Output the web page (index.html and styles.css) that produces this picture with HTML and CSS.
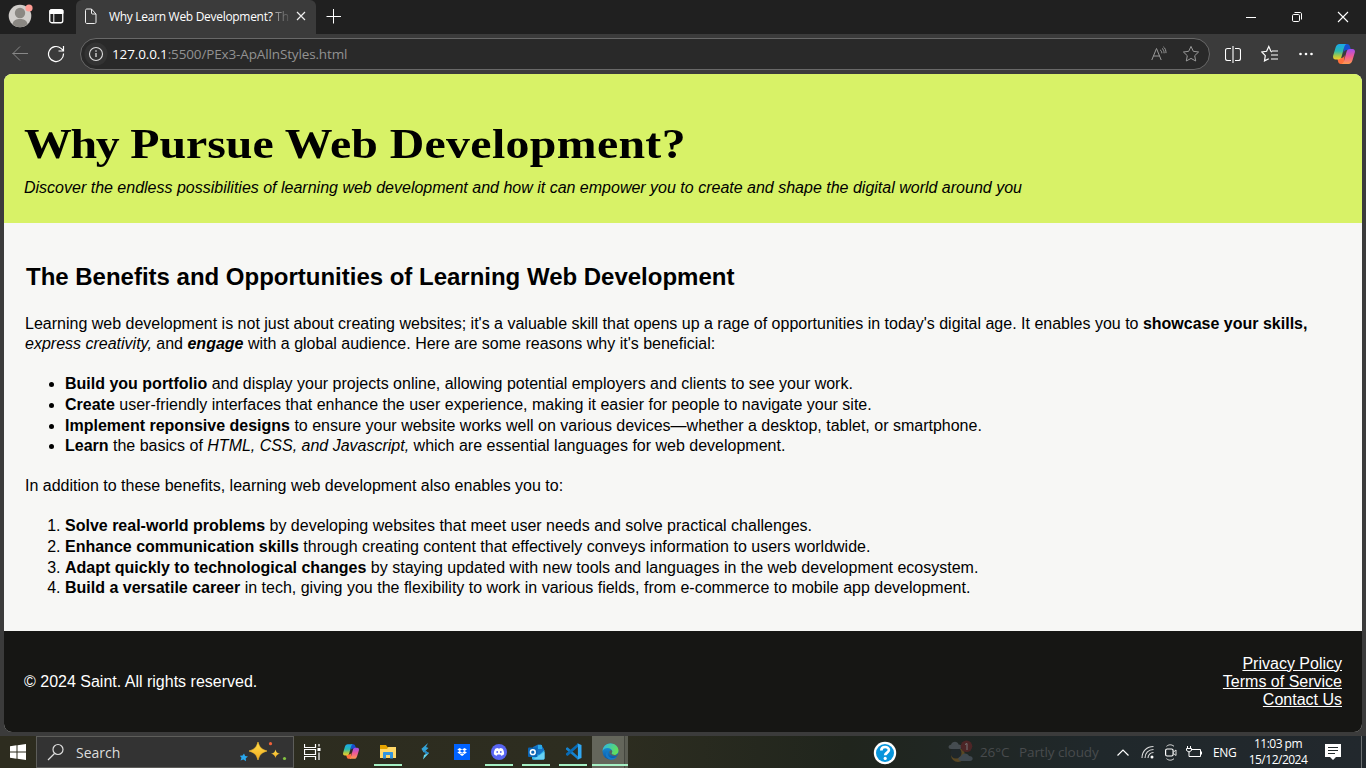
FILE: index.html
```html
<!DOCTYPE html>
<html lang="en">
<head>
<meta charset="utf-8">
<title>Why Learn Web Development?</title>
<link rel="stylesheet" href="styles.css">
</head>
<body>
<svg width="0" height="0" class="defs">
  <defs>
    <linearGradient id="cpA" x1="0" y1="0" x2="0" y2="1"><stop offset="0" stop-color="#1aa7ea"/><stop offset=".45" stop-color="#29b9b0"/><stop offset=".75" stop-color="#a5c84a"/><stop offset="1" stop-color="#f5cd2a"/></linearGradient>
    <linearGradient id="cpB" x1="0" y1="0" x2="0" y2="1"><stop offset="0" stop-color="#a24dee"/><stop offset=".5" stop-color="#ef5b94"/><stop offset="1" stop-color="#ff9a4d"/></linearGradient>
    <linearGradient id="edA" x1="0" y1="0" x2="1" y2=".4"><stop offset="0" stop-color="#2bb4ea"/><stop offset="1" stop-color="#61df5c"/></linearGradient>
    <linearGradient id="edB" x1="0" y1="0" x2="0" y2="1"><stop offset="0" stop-color="#1b9de2"/><stop offset="1" stop-color="#0d55a4"/></linearGradient>
    <linearGradient id="gold" x1="0" y1="0" x2="0" y2="1"><stop offset="0" stop-color="#ffe04b"/><stop offset="1" stop-color="#f3a91f"/></linearGradient>
    <symbol id="copilot" viewBox="0 0 22 20">
      <path d="M11 0h3c1.800 0 2.500 1 3 2.800l1 3.200h-4c-2 0-2.800 1-3.500 3z" fill="#174fd0"/>
      <path d="M11 20H8c-1.800 0-2.500-1-3-2.800L4.300 14H8c2 0 3-1 3.600-3z" fill="#ff703b"/>
      <path d="M6.500 0h7c-1.400.6-2 2-2.500 3.700l-2.300 8.500C8 14.600 7 15.500 5 15.500H2.500C.4 15.500-.3 13.600.2 11.600L2.600 3.500C3.300 1.200 4.500 0 6.500 0z" fill="url(#cpA)"/>
      <path d="M15.500 20H8.700c1.400-.6 2-2 2.500-3.700l2.200-8C14.100 5.900 15 5 17 5h2.500c2.100 0 2.800 1.700 2.300 3.500l-2.400 8c-.7 2.300-1.900 3.500-3.900 3.500z" fill="url(#cpB)"/>
    </symbol>
  </defs>
</svg>
<div class="screen">
  <header class="tabstrip">
    <svg class="avatar" width="26" height="28" viewBox="0 0 26 28"><circle cx="12" cy="16" r="11.300" fill="#d0cdca"/><circle cx="12" cy="13" r="5.200" fill="#8a8782"/><path d="M4.500 24c.8-3.800 4-5 7.500-5s6.700 1.200 7.500 5c-4 4.400-11 4.400-15 0z" fill="#8a8782"/><circle cx="21" cy="8" r="3.600" fill="#ff9c94"/></svg>
    <svg class="tab-actions" width="15" height="15" viewBox="0 0 15 15"><rect x=".75" y=".75" width="13" height="13" rx="2" fill="none" stroke="#fff" stroke-width="1.300"/><path d="M1 1h13v3.500H1zM4.800 4v10" fill="#fff" stroke="#fff"/></svg>
    <div class="tab">
      <svg width="14" height="17" viewBox="0 0 14 17"><path d="M1.500 2.500c0-1 .5-1.500 1.500-1.500h4.500l4.500 5v8c0 1-.5 1.500-1.500 1.500H3c-1 0-1.500-.5-1.500-1.500zM7.500 1v4c0 .7.300 1 1 1H12" fill="none" stroke="#eee"/></svg>
      <span class="tab-title">Why Learn Web Development? <span>Th</span></span>
      <svg width="10" height="10" viewBox="0 0 10 10"><path d="M1 1l8 8M9 1L1 9" stroke="#eee" stroke-width="1.200"/></svg>
    </div>
    <svg class="new-tab" width="15" height="15" viewBox="0 0 15 15"><path d="M7.500 0v14.500M.5 7.500H15" stroke="#fff" stroke-width="1"/></svg>
    <div class="window-controls">
      <svg width="46" height="34" viewBox="0 0 46 34"><path d="M18 17.500h10" stroke="#fff"/></svg>
      <svg width="46" height="34" viewBox="0 0 46 34"><rect x="18.500" y="14.500" width="7" height="7" rx="1.200" fill="none" stroke="#fff"/><path d="M20.500 12.500H26c1 0 1.500.5 1.500 1.500v5.500" fill="none" stroke="#fff"/></svg>
      <svg width="46" height="34" viewBox="0 0 46 34"><path d="M18 12l10 10M28 12L18 22" stroke="#fff" stroke-width="1.100"/></svg>
    </div>
  </header>

  <nav class="toolbar">
    <svg class="back" width="17" height="16" viewBox="0 0 17 16"><path d="M16 7.500H.5M8 .5l-7 7 7 7" fill="none" stroke="#888"/></svg>
    <svg class="reload" width="18" height="18" viewBox="0 0 18 18"><path d="M16.500 8.500A7.500 7.500 0 1 1 14 3.400l2.200 2M16.500 1v5h-5" fill="none" stroke="#fff" stroke-width="1.200"/></svg>
    <div class="address">
      <svg class="info" width="24" height="24" viewBox="0 0 24 24"><circle cx="12" cy="12" r="11.500" fill="#333"/><circle cx="12" cy="12" r="6.500" fill="none" stroke="#ddd" stroke-width="1.100"/><path d="M12 11v4M12 8.300v1.400" stroke="#ddd" stroke-width="1.300"/></svg>
      <span class="url"><b>127.0.0.1</b><span>:5500/PEx3-ApAllnStyles.html</span></span>
      <svg class="read" width="16" height="16" viewBox="0 0 16 16"><path d="M.8 14L5.500 2.500 10.200 14M2.400 10h6.200M9 3.800c1.200.8 1.800 2 1.800 3.500M11 2.300c1.400 1 2.100 2.700 2.100 5M12.300.8c2 1.400 2.700 3.700 2.700 6.300" fill="none" stroke="#999"/></svg>
      <svg width="18" height="18" viewBox="0 0 18 18"><path d="M9 1.400l2.300 4.900 5.300.7-3.900 3.700 1 5.300L9 13.400 4.300 16l1-5.300L1.400 7l5.300-.7z" fill="none" stroke="#999" stroke-linejoin="round"/></svg>
    </div>
    <svg class="split" width="16" height="17" viewBox="0 0 16 17"><path d="M6 2.500H2.500c-1.300 0-2 .7-2 2v8c0 1.300.7 2 2 2H6M10 2.500h3.500c1.300 0 2 .7 2 2v8c0 1.300-.7 2-2 2H10M8 0v17" fill="none" stroke="#fff" stroke-width="1.100"/></svg>
    <svg class="favs" width="18" height="18" viewBox="0 0 18 18"><path d="M11 7L10 6.400 7.800 1.500 5.600 6.300.8 7l3.500 3.600-.8 5.300 4.300-2.200M11 6h6M10 10h7M10 14h7" fill="none" stroke="#fff" stroke-width="1.200"/></svg>
    <svg class="more" width="14" height="4" viewBox="0 0 14 4"><g fill="#fff"><circle cx="1.500" cy="2" r="1.300"/><circle cx="7" cy="2" r="1.300"/><circle cx="12.500" cy="2" r="1.300"/></g></svg>
    <svg class="sidebar-copilot" width="22" height="20"><use href="#copilot"/></svg>
  </nav>

  <main class="page">
    <section class="hero">
      <h1><span class="headline"><span class="tight">Why</span> Pursue Web <span class="loose">Development?</span></span></h1>
      <p>Discover the endless possibilities of learning web development and how it can empower you to create and shape the digital world around you</p>
    </section>
    <section class="content">
      <h2>The Benefits and Opportunities of Learning Web Development</h2>
      <p>Learning web development is not just about creating websites; it's a valuable skill that opens up a rage of opportunities in today's digital age. It enables you to <b>showcase your skills,</b><br><i>express creativity,</i> and <b><i>engage</i></b> with a global audience. Here are some reasons why it's beneficial:</p>
      <ul>
        <li><b>Build you portfolio</b> and display your projects online, allowing potential employers and clients to see your work.</li>
        <li><b>Create</b> user-friendly interfaces that enhance the user experience, making it easier for people to navigate your site.</li>
        <li><b>Implement reponsive designs</b> to ensure your website works well on various devices—whether a desktop, tablet, or smartphone.</li>
        <li><b>Learn</b> the basics of <i>HTML, CSS, and Javascript,</i> which are essential languages for web development.</li>
      </ul>
      <p>In addition to these benefits, learning web development also enables you to:</p>
      <ol>
        <li><b>Solve real-world problems</b> by developing websites that meet user needs and solve practical challenges.</li>
        <li><b>Enhance communication skills</b> through creating content that effectively conveys information to users worldwide.</li>
        <li><b>Adapt quickly to technological changes</b> by staying updated with new tools and languages in the web development ecosystem.</li>
        <li><b>Build a versatile career</b> in tech, giving you the flexibility to work in various fields, from e-commerce to mobile app development.</li>
      </ol>
    </section>
    <footer class="site-footer">
      <span>© 2024 Saint. All rights reserved.</span>
      <div class="links"><a href="#">Privacy Policy</a><a href="#">Terms of Service</a><a href="#">Contact Us</a></div>
    </footer>
  </main>

  <div class="taskbar">
    <div class="start"><svg width="16" height="16" viewBox="0 0 16 16"><path d="M0 2.300L6.500 1.300v6.200H0zM7.500 1.200L16 0v7.500H7.500zM0 8.500h6.500v6.200L0 13.700zM7.500 8.500H16V16l-8.500-1.200z" fill="#fff"/></svg></div>
    <div class="search">
      <svg width="18" height="18" viewBox="0 0 18 18"><circle cx="11" cy="6.500" r="5" fill="none" stroke="#ddd" stroke-width="1.200"/><path d="M7.500 10.500L1 17" stroke="#ddd" stroke-width="1.300"/></svg>
      <span>Search</span>
      <svg class="sparkles" width="48" height="20" viewBox="0 0 48 20"><path d="M18 0c1.800 5.500 3 7 9 9-6 2-7.200 3.500-9 9-1.800-5.500-3-7-9-9 6-2 7.200-3.500 9-9z" fill="url(#gold)" stroke="#f8bd2c" stroke-width=".6"/><path d="M35.500 7.500c.8 2.800 1.500 3.500 4.500 4.300-3 .8-3.700 1.500-4.500 4.300-.8-2.800-1.500-3.500-4.500-4.300 3-.8 3.700-1.500 4.500-4.300z" fill="url(#gold)"/><path d="M4 11.500l1.200 2.500 2.800.6-2.200 1.600.2 3-2.600-1.600-2.900.8 1-2.600-1.600-2 2.700-.2z" fill="#2aa8ee"/><circle cx="30.500" cy="1.700" r="1.600" fill="#f0613a"/><circle cx="44.500" cy="16.500" r="1.600" fill="#84c341"/></svg>
    </div>
    <div class="apps">
      <div class="app"><svg width="17" height="16" viewBox="0 0 17 16"><path d="M.5 0v3.500h11V0M.5 16v-3.500h11V16M.5 5.500h11v5H.5zM15 0v2.500M15 8.500V16" fill="none" stroke="#fff" stroke-width="1.200"/><rect x="13.500" y="4" width="3" height="3" fill="#fff"/></svg></div>
      <div class="app"><svg width="16" height="15"><use href="#copilot"/></svg></div>
      <div class="app open"><svg width="16" height="15" viewBox="0 0 16 15"><path d="M0 1h6l1.500 2H16v11H0z" fill="#e6a400"/><path d="M0 5h7l1.500-2H16v11H0z" fill="#ffd868"/><path d="M3 14.500V8.800C3 8.200 3.400 8 4 8h8c.6 0 1 .2 1 .8v5.700h-3V11H6v3.500z" fill="#3294df"/></svg></div>
      <div class="app"><svg width="10" height="17" viewBox="0 0 10 17"><path d="M8 0L1.500 5.800l2.200 3.700L8.500 5 6 4z" fill="#33a2d7"/><path d="M1.500 5.800L9 10 3 16.500 4 12l2-1z" fill="#65d5ed"/><path d="M1.500 5.800L9 10l-2.500 1.300z" fill="#2484c6"/></svg></div>
      <div class="app"><svg width="16" height="16" viewBox="0 0 16 16"><path d="M0 0h16v16H0z" fill="#0062ff"/><path d="M5.700 4l2.400 1.500L5.700 7 3.300 5.500zM10.500 4l2.400 1.500L10.500 7 8.100 5.500zM5.700 7l2.400 1.500L5.700 10 3.300 8.500zM10.500 7l2.400 1.500-2.400 1.500-2.400-1.500zM8.100 9.200l2.300 1.400-2.300 1.500-2.300-1.500z" fill="#fff"/></svg></div>
      <div class="app open"><svg width="16" height="16" viewBox="0 0 16 16"><circle cx="8" cy="8" r="8" fill="#5865f2"/><path d="M4.300 4.800c1-.6 1.700-.8 2.400-.8l.3.600h2l.3-.6c.8 0 1.500.2 2.400.8 1 1.700 1.600 3.500 1.400 5.500-.9.800-1.900 1.200-2.900 1.400l-.7-1.100H6.500l-.7 1.100c-1-.2-2-.6-2.900-1.400-.2-2 .4-3.900 1.400-5.500z" fill="#fff"/><ellipse cx="6.200" cy="8" rx=".9" ry="1" fill="#5865f2"/><ellipse cx="9.800" cy="8" rx=".9" ry="1" fill="#5865f2"/></svg></div>
      <div class="app open"><svg width="17" height="16" viewBox="0 0 17 16"><path d="M5 3l5-2.500h3L16 5v9l-2 1.500H4z" fill="#1473c5"/><path d="M10 1h4v4h-4z" fill="#2aa9e8"/><path d="M4 7l7 4 5.500-5v8c0 1-.5 1.500-1.500 1.500H6c-1.500 0-2-.5-2-1.500z" fill="#38b9ee"/><path d="M5 15.500L16.500 8v6c0 1-.5 1.500-1.500 1.500z" fill="#69d2f5"/><rect x="0" y="3.500" width="9.500" height="9.500" rx="1" fill="#0b65b5"/><circle cx="4.800" cy="8.200" r="2.400" fill="none" stroke="#fff" stroke-width="1.500"/></svg></div>
      <div class="app open"><svg width="17" height="17" viewBox="0 0 17 17"><path d="M1 5l1.600-.8 10.800 9.500V17L1 6.500z" fill="#1583cf"/><path d="M1 12l1.600 1L13.400 3.500V0L1 10.500z" fill="#086bb5"/><path d="M12 .3L16.500 2v13L12 16.700c.6-.3.900-.8.900-1.500V1.800c0-.7-.3-1.200-.9-1.500z" fill="#30a8f2"/></svg></div>
      <div class="app active"><svg width="17" height="17" viewBox="0 0 17 17"><circle cx="8.500" cy="8.500" r="8" fill="url(#edB)"/><path d="M.5 8C.9 3.500 4.100.5 8.500.5c4.800 0 8 3.400 8 7.200 0 2.600-1.900 4.200-4.200 4.200-1.800 0-2.800-.8-2.800-1.500 0-.6.700-.9.700-2.100C10.200 6.300 8 5 5.600 5 3.200 5 1.300 6.200.5 8z" fill="url(#edA)"/><path d="M5.800 8.500C4.900 12 7.500 15 11 15c1.500 0 3-.5 4-1.200-2.500 3.900-7.500 4-10.200.6C2.900 12 3.300 9.800 5.800 8.500z" fill="#147ac8"/><path d="M8.300 7.300c-1.600 1.300-1 3.700.8 4.800 2.200 1.300 5.600 1.200 7.100-.7-.9.300-2 .6-3.400.5-1.800 0-3.300-.8-3.300-1.500 0-.6.700-.9.700-2.100 0-.7-.8-1.200-1.900-1z" fill="#5b635f"/></svg></div>
    </div>
    <svg class="help" width="24" height="24" viewBox="0 0 24 24"><circle cx="12" cy="12" r="11.200" fill="#fff"/><circle cx="12" cy="12" r="9" fill="#0795dc"/><path d="M8.300 9.500C8.300 4.900 15.900 5 15.900 9c0 2.500-3.700 2.600-3.700 5.300" fill="none" stroke="#fff" stroke-width="2.700"/><circle cx="12.200" cy="17.400" r="1.600" fill="#fff"/></svg>
    <div class="weather">
      <svg width="27" height="24" viewBox="0 0 27 24"><circle cx="10" cy="15" r="7" fill="#594723"/><circle cx="8" cy="13" r="5.500" fill="#20272a"/><path d="M3 9C-.5 9 0 4.700 3 4.800 4 .8 10 1 10.500 4.500c4 0 4 4.500 1 4.500z" fill="#454c50"/><path d="M13 21c-4 0-3-5 0-4.500 1-4 7-4 8-.5 5 0 4.500 5 1 5z" fill="#3f484f"/><circle cx="18.500" cy="6.300" r="5.800" fill="#4c2526"/><path d="M17 4.500l2-1V10" fill="none" stroke="#777"/></svg>
      <span class="temp">26°C</span><span class="cond">Partly cloudy</span>
    </div>
    <div class="tray">
      <svg class="chev" width="12" height="7" viewBox="0 0 12 7"><path d="M.5 6.500L6 1l5.500 5.500" fill="none" stroke="#fff" stroke-width="1.200"/></svg>
      <svg class="wifi" width="13" height="14" viewBox="0 0 13 14"><path d="M1 13C1 6 6 1.500 12.500 1.500M4 13c0-5 3.500-8.500 8.500-8.500M7 13c0-3 2.500-5.500 5.500-5.500" fill="none" stroke="#ddd" stroke-width="1.100"/><circle cx="11" cy="12" r="1.500" fill="#fff"/></svg>
      <svg class="cam" width="12" height="17" viewBox="0 0 12 17"><rect x=".6" y="5" width="7.500" height="7" rx="1.500" fill="none" stroke="#fff" stroke-width="1.200"/><path d="M8.500 8l2.500-2v5.500l-2.500-2M1.500 2.300c2.500-2 5-2 7.500 0M1.500 14.700c2.500 2 5 2 7.500 0" fill="none" stroke="#ddd"/></svg>
      <svg class="batt" width="17" height="12" viewBox="0 0 17 12"><path d="M5 3.500h9.500v7H4.500M15.500 5.500v3M1.500 0v2M4.500 0v2M.5 2.500h5v2L3 6 .5 4.500zM3 6v4.500h2" fill="none" stroke="#fff"/></svg>
      <span class="lang">ENG</span>
      <div class="clock"><span class="time">11:03 pm</span><span class="date">15/12/2024</span></div>
      <svg class="notice" width="16" height="16" viewBox="0 0 16 16"><path d="M0 0h16v13h-5l-3 3-3-3H0z" fill="#fff"/><path d="M3 3.500h10M3 6.500h10M3 9.500h7" stroke="#222a2c"/></svg>
      <i class="peek"></i>
    </div>
  </div>
</div>
</body>
</html>
```
FILE: styles.css
```css
* { box-sizing: border-box; }
html, body { margin: 0; }
body { width: 1366px; height: 768px; overflow: hidden; font-family: "Liberation Sans", Arial, sans-serif; }
svg { display: block; flex: none; }
.defs { height: 0; position: absolute; }
.screen { display: flex; flex-direction: column; width: 1366px; height: 768px; background: #3b3b3b; }

.tabstrip, .toolbar, .taskbar { font-family: "Open Sans", "Noto Sans", sans-serif; color: #fff; white-space: nowrap; }
.tabstrip { display: flex; align-items: center; height: 34px; flex: none; background: #202020; padding-left: 8px; }
.avatar { margin-top: -6px; }
.tab-actions { margin: -2px 13px 0 15px; }
.tab { display: flex; align-items: center; align-self: stretch; width: 240px; margin-left: -1px; padding: 0 11px 2px 8px; background: #3b3b3b; border-radius: 6px 6px 0 0; }
.tab-title { width: 179px; margin: 0 8px 0 11px; font-size: 12px; letter-spacing: -0.3px; }
.tab-title span { color: transparent; background: linear-gradient(90deg, #aaa, #555); -webkit-background-clip: text; background-clip: text; }
.new-tab { margin: -2px 0 0 10px; }
.window-controls { display: flex; margin-left: auto; }

.toolbar { display: flex; align-items: center; height: 40px; flex: none; padding-left: 12px; }
.reload { margin-left: 18px; }
.address { display: flex; align-items: center; width: 1130px; height: 32px; margin-left: 15px; padding: 0 9px 0 3px; border: 1px solid #686868; border-radius: 16px; background: #292929; }
.url { flex: 1; margin-left: 4px; font-size: 13.500px; letter-spacing: -0.14px; color: #929292; }
.url b { color: #fff; font-weight: 400; }
.read { margin-right: 15px; }
.split { margin-left: 15px; }
.favs { margin-left: 20px; }
.more { margin-left: 20px; }
.sidebar-copilot { margin-left: 20px; }

.page { display: flex; flex-direction: column; height: 658px; margin: 0 4px; flex: none; border-radius: 8px; overflow: hidden; background: #f7f7f5; color: #000; font-size: 16px; }
.hero { height: 149px; flex: none; padding: 45px 20px 0; background: #d8f267; }
.hero h1 { margin: 0; height: 50px; font: 700 42.500px/50px Georgia, "Liberation Serif", serif; white-space: nowrap; }
.headline { display: inline-block; transform-origin: 0 50%; transform: scaleX(1.125); }
.tight { letter-spacing: -1.2px; }
.loose { letter-spacing: 0.3px; }
.hero p { margin: 9px 0 0; font-style: italic; line-height: 20px; }
.content { flex: 1; padding: 41px 21px 0; white-space: nowrap; }
.content h2 { margin: 0 0 24px 1px; font-size: 24px; line-height: 26px; letter-spacing: -0.01px; }
.content p { margin: 0; line-height: 20px; }
.content ul, .content ol { margin: 20px 0 19.200px; padding-left: 40px; line-height: 20.800px; }
.content ul { margin-bottom: 18.800px; }
.site-footer { display: flex; align-items: center; justify-content: space-between; height: 101px; flex: none; padding: 0 20px; background: #161614; color: #fff; }
.links { display: flex; flex-direction: column; align-items: flex-end; line-height: 18px; }
.links a { color: #fff; }

.taskbar { display: flex; align-items: stretch; height: 32px; margin-top: auto; flex: none; background: linear-gradient(90deg, #2d2c1f 0, #2d2d20 45%, #20251d 62%, #20282b 80%, #22282d 100%); }
.start { display: grid; place-items: center; width: 36px; }
.search { display: flex; align-items: center; width: 258px; padding: 0 5px 0 10px; border: 1px solid #5d5d5a; background: #333; color: #ddd; font-size: 14px; }
.search span { margin-left: 11px; }
.sparkles { margin-left: auto; }
.apps { display: flex; }
.app { display: grid; place-items: center; width: 36px; margin-right: 1px; }
.app svg { margin-top: -1px; }
.app:first-child { margin-right: 3px; }
.open { background: linear-gradient(#a5f0c4, #a5f0c4) 50% 28px / 28px 2px no-repeat; }
.active { background: linear-gradient(#a5f0c4, #a5f0c4) 0 28px / 36px 2px no-repeat, linear-gradient(90deg, #64665b 32px, #44463e 32px, #44463e 33px, #5b5d53 33px); }
.help { align-self: center; margin: 1px 0 0 244px; }
.weather { display: flex; align-items: center; margin-left: 51px; color: #484b4d; font-size: 13.500px; letter-spacing: -0.1px; }
.temp { width: 33px; margin-left: 5px; }
.cond { width: 80px; margin-left: 6px; }
.tray { display: flex; align-items: center; flex: 1; }
.chev { margin-left: 18px; }
.wifi { margin-left: 12px; }
.cam { margin-left: 11px; }
.batt { margin-left: 9px; }
.lang { width: 24px; margin-left: 10px; font-size: 12px; letter-spacing: -0.4px; }
.clock { display: flex; flex-direction: column; align-items: center; width: 60px; margin-left: 11px; font-size: 12px; line-height: 16px; letter-spacing: -0.5px; }
.notice { margin-left: 17px; }
.peek { align-self: stretch; width: 1px; margin: 0 4px 0 auto; background: #6c7072; }
```
